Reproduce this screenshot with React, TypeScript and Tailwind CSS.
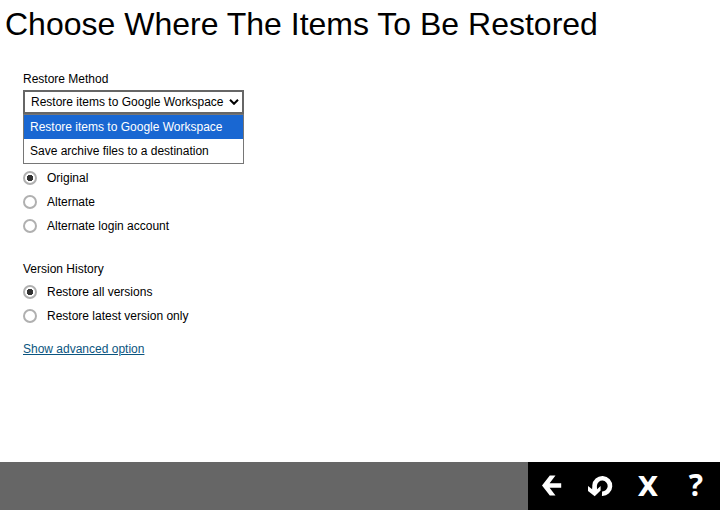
import { useState } from "react";

const methods = [
  "Restore items to Google Workspace",
  "Save archive files to a destination",
];

const locations = ["Original", "Alternate", "Alternate login account"];

const versions = ["Restore all versions", "Restore latest version only"];

type RadioListProps = {
  name: string;
  items: string[];
  value: string;
  onChange: (value: string) => void;
};

const RadioList = ({ name, items, value, onChange }: RadioListProps) => {
  return (
    <div className="flex flex-col">
      {items.map((item) => (
        <label key={item} className="flex h-6 w-fit items-center gap-2.5">
          <input
            type="radio"
            name={name}
            checked={value === item}
            onChange={() => onChange(item)}
            className="size-3.5 appearance-none rounded-full border-2 border-[#b0b0b0] bg-white checked:bg-[radial-gradient(circle,#333_3px,#fff_3px)]"
          />
          {item}
        </label>
      ))}
    </div>
  );
};

const Page = () => {
  const [method, setMethod] = useState(methods[0]);
  const [open, setOpen] = useState(true);
  const [location, setLocation] = useState(locations[0]);
  const [version, setVersion] = useState(versions[0]);

  const handleSelect = (item: string) => {
    setMethod(item);
    setOpen(false);
  };

  return (
    <div className="flex min-h-screen flex-col bg-white font-['Liberation_Sans',Arial,sans-serif] text-xs text-black">
      <h1 className="px-[5px] text-[32px] leading-12">
        Choose Where The Items To Be Restored
      </h1>

      <main className="flex grow flex-col items-start px-[23px] pt-[23px]">
        <label htmlFor="method">Restore Method</label>
        <div className="relative mt-[3px]">
          <select
            id="method"
            value={method}
            onChange={(e) => setMethod(e.target.value)}
            className="block h-6 w-[221px] appearance-none border-2 border-[#666] bg-white pr-4 pl-1.5"
          >
            {methods.map((item) => (
              <option key={item}>{item}</option>
            ))}
          </select>
          <svg
            viewBox="0 0 10 6"
            className="pointer-events-none absolute top-[9px] right-[5px] h-1.5 w-2.5"
            fill="none"
            stroke="#000"
            strokeWidth="2"
          >
            <path d="M1 .8l4 4 4-4" />
          </svg>
          {open && (
            <div className="absolute top-full left-0 flex w-full flex-col border border-[#767676] bg-white">
              {methods.map((item) => (
                <button
                  key={item}
                  onClick={() => handleSelect(item)}
                  className={
                    item === method
                      ? "h-6 bg-[#1967d2] px-1.5 text-left text-white"
                      : "h-6 px-1.5 text-left"
                  }
                >
                  {item}
                </button>
              ))}
            </div>
          )}
        </div>

        <div className="mt-[52px]">
          <RadioList
            name="location"
            items={locations}
            value={location}
            onChange={setLocation}
          />
        </div>

        <h2 className="mt-[23px] mb-[3px]">Version History</h2>
        <RadioList
          name="version"
          items={versions}
          value={version}
          onChange={setVersion}
        />

        <a href="#advanced" className="mt-[13px] text-[#0b5580] underline">
          Show advanced option
        </a>
      </main>

      <footer className="flex h-12 justify-end bg-[#666]">
        <div className="flex bg-black leading-none font-bold text-white">
          <button aria-label="Back" className="size-12">
            <svg viewBox="0 0 48 48" className="size-12" fill="#fff">
              <path d="M14 23.500l7.800-10h5.700L21.600 21.300H33.200v4.400H21.600l5.900 7.800h-5.700z" />
            </svg>
          </button>
          <button aria-label="Undo" className="size-12">
            <svg viewBox="0 0 48 48" className="size-12">
              <path
                d="M18.600 30V23.500a7.700 7.700 0 1 1 7.400 8.200"
                fill="none"
                stroke="#fff"
                strokeWidth="4.600"
              />
              <path d="M12 24l4.500 3.500v-2h4.300v2L24.600 24v4.500L18.700 34.300 12 29z" fill="#fff" />
            </svg>
          </button>
          <button className="size-12 font-['DejaVu_Sans',sans-serif] text-[27px]">
            X
          </button>
          <button className="size-12 pb-0.5 font-['Open_Sans',sans-serif] text-[30px]">
            ?
          </button>
        </div>
      </footer>
    </div>
  );
};

export default Page;
